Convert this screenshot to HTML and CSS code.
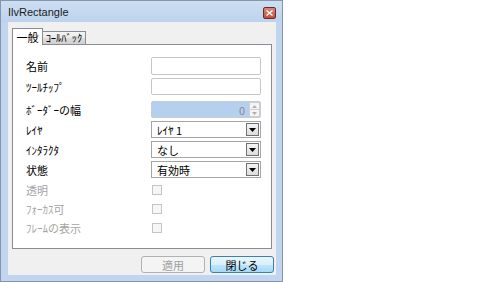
FILE: index.html
```html
<!DOCTYPE html>
<html lang="ja">
<head>
    <meta charset="UTF-8">
    <title>IlvRectangle</title>
    <link rel="stylesheet" href="styles.css">
</head>
<body>
    <div class="window">
        <div class="titlebar">
            <span class="title">IlvRectangle</span>
            <span class="close-btn">
                <svg width="7" height="6" viewBox="0 0 7 6">
                    <path d="M0.5 0.5 L6.5 5.5 M6.5 0.5 L0.5 5.5" stroke="#fff" stroke-width="1.4" fill="none"/>
                </svg>
            </span>
        </div>
        <div class="client">
            <div class="tabs">
                <div class="tab active">一般</div>
                <div class="tab other">ｺｰﾙﾊﾞｯｸ</div>
            </div>
            <div class="panel">
                <div class="row r1">
                    <span class="label">名前</span>
                    <div class="field text"></div>
                </div>
                <div class="row r2">
                    <span class="label">ﾂｰﾙﾁｯﾌﾟ</span>
                    <div class="field text"></div>
                </div>
                <div class="row r3">
                    <span class="label">ﾎﾞｰﾀﾞｰの幅</span>
                    <div class="field spin">
                        <span class="spin-value">0</span>
                        <div class="spin-buttons">
                            <span class="spin-btn"><svg width="5" height="3" viewBox="0 0 5 3"><path d="M0 3 L2.5 0 L5 3 Z" fill="#b0b0b0"/></svg></span>
                            <span class="spin-btn"><svg width="5" height="3" viewBox="0 0 5 3"><path d="M0 0 L2.5 3 L5 0 Z" fill="#b0b0b0"/></svg></span>
                        </div>
                    </div>
                </div>
                <div class="row r4">
                    <span class="label">ﾚｲﾔ</span>
                    <div class="field select"><span class="select-value">ﾚｲﾔ 1</span><span class="drop-btn"><svg width="7" height="4" viewBox="0 0 7 4"><path d="M0 0 L7 0 L3.5 4 Z" fill="#000"/></svg></span></div>
                </div>
                <div class="row r5">
                    <span class="label">ｲﾝﾀﾗｸﾀ</span>
                    <div class="field select"><span class="select-value">なし</span><span class="drop-btn"><svg width="7" height="4" viewBox="0 0 7 4"><path d="M0 0 L7 0 L3.5 4 Z" fill="#000"/></svg></span></div>
                </div>
                <div class="row r6">
                    <span class="label">状態</span>
                    <div class="field select"><span class="select-value">有効時</span><span class="drop-btn"><svg width="7" height="4" viewBox="0 0 7 4"><path d="M0 0 L7 0 L3.5 4 Z" fill="#000"/></svg></span></div>
                </div>
                <div class="row cb-row first">
                    <span class="label disabled">透明</span>
                    <span class="checkbox"></span>
                </div>
                <div class="row cb-row">
                    <span class="label disabled">ﾌｫｰｶｽ可</span>
                    <span class="checkbox"></span>
                </div>
                <div class="row cb-row">
                    <span class="label disabled">ﾌﾚｰﾑの表示</span>
                    <span class="checkbox"></span>
                </div>
            </div>
            <div class="buttons">
                <button class="btn" disabled>適用</button>
                <button class="btn default">閉じる</button>
            </div>
        </div>
    </div>
</body>
</html>
```

FILE: styles.css
```css
body {
    margin: 0;
    background-color: #fff;
    font-family: "Noto Sans CJK JP", sans-serif;
    font-size: 11px;
    color: #000;
}

.window {
    width: 283px;
    height: 282px;
    box-sizing: border-box;
    border: 1px solid #8496ab;
    background-color: #c1d5ee;
    padding: 0 6px 6px 7px;
    display: flex;
    flex-direction: column;
}

.titlebar {
    height: 21px;
    margin: 0 -6px 0 -7px;
    padding: 0 6px 0 7px;
    background: linear-gradient(#cddef2, #bdd3ed);
    display: flex;
    align-items: center;
    justify-content: space-between;
}

.title {
    font-family: "Liberation Sans", sans-serif;
    font-size: 11px;
    color: #1a1a1a;
    padding-top: 1px;
}

.close-btn {
    width: 11px;
    height: 10px;
    border: 1px solid #6e2a2a;
    border-radius: 2px;
    background: linear-gradient(#d9867b, #c4503e);
    display: flex;
    align-items: center;
    justify-content: center;
    margin-top: 2px;
}

.client {
    flex: 1;
    background-color: #f0f0f0;
    padding: 6px 4px 0;
    display: flex;
    flex-direction: column;
}

.tabs {
    display: flex;
    align-items: flex-end;
    height: 16px;
}

.tab {
    box-sizing: border-box;
    border: 1px solid #898c95;
    border-bottom: none;
    height: 13px;
    line-height: 12px;
    text-align: center;
    font-size: 10.5px;
    white-space: nowrap;
    background: linear-gradient(#f3f3f3, #ebebeb 50%, #dddddd 50%, #d0d0d0);
}

.tab.active {
    width: 31px;
    height: 17px;
    line-height: 17px;
    font-size: 11px;
    background: #fff;
    position: relative;
    z-index: 1;
    margin-bottom: -1px;
}

.tab.other {
    width: 44px;
    margin-left: -1px;
}

.panel {
    height: 205px;
    box-sizing: border-box;
    border: 1px solid #898c95;
    background-color: #fff;
    padding: 12px 10px 0 13px;
}

.row {
    display: flex;
    align-items: center;
    height: 18px;
}

.r2 { margin-top: 3px; height: 17px; }
.r3 { margin-top: 6px; height: 17px; }
.r4, .r5, .r6 { margin-top: 3px; height: 17px; }

.cb-row {
    height: 19px;
}

.cb-row.first {
    margin-top: 2px;
}

.label {
    width: 125px;
    flex: none;
    white-space: nowrap;
}

.label.disabled {
    color: #a3a3a3;
}

.field {
    width: 110px;
    height: 100%;
    box-sizing: border-box;
    border: 1px solid #c3c6cb;
    border-radius: 2px;
    background-color: #fff;
    display: flex;
    align-items: center;
}

.field.spin {
    background-color: #b5cfee;
    border-color: #c6ccd3;
    justify-content: flex-end;
}

.spin-value {
    color: #8c8c8c;
    margin-right: 4px;
}

.spin-buttons {
    width: 11px;
    height: 100%;
    display: flex;
    flex-direction: column;
    background-color: #f4f4f4;
}

.spin-btn {
    flex: 1;
    border: 1px solid #d0d0d0;
    display: flex;
    align-items: center;
    justify-content: center;
}

.spin-btn + .spin-btn {
    border-top: none;
}

.field.select {
    border-color: #a5a5a5;
    border-radius: 0;
    justify-content: space-between;
    padding: 1px;
}

.select-value {
    padding-left: 4px;
}

.drop-btn {
    width: 13px;
    height: 100%;
    box-sizing: border-box;
    border: 1px solid #707070;
    background: linear-gradient(#f4f4f4, #dcdcdc);
    display: flex;
    align-items: center;
    justify-content: center;
}

.checkbox {
    width: 10px;
    height: 10px;
    box-sizing: border-box;
    border: 1px solid #c4c4c4;
    background-color: #f6f6f6;
    margin-left: 1px;
}

.buttons {
    display: flex;
    justify-content: flex-end;
    gap: 5px;
    margin-top: 7px;
    margin-right: -2px;
}

.btn {
    width: 64px;
    height: 17px;
    padding: 0;
    border: 1px solid #adb2b5;
    border-radius: 3px;
    background-color: #f4f4f4;
    font-family: "Noto Sans CJK JP", sans-serif;
    font-size: 11px;
    line-height: 14px;
    color: #a0a0a0;
}

.btn.default {
    border-color: #3c7fb1;
    background: linear-gradient(#eaf6fd, #d9f0fc 50%, #bee6fd 50%, #a7d9f5);
    color: #000;
}
```
